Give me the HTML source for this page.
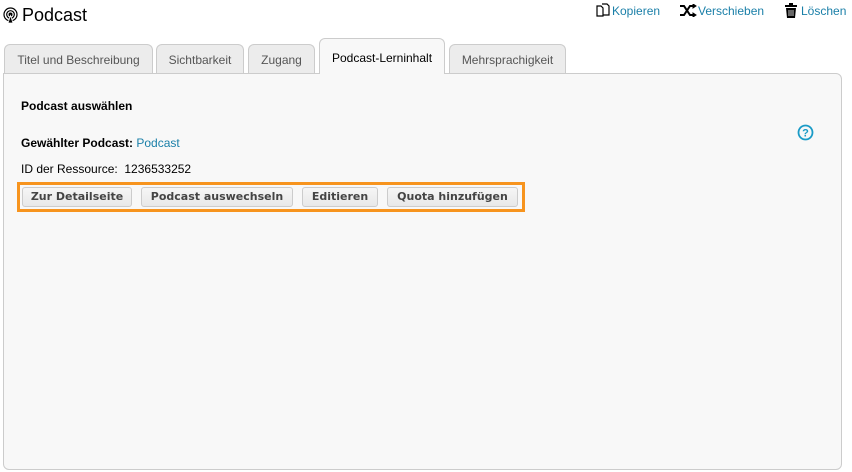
<!DOCTYPE html>
<html><head><meta charset="utf-8"><style>
*{box-sizing:border-box;margin:0;padding:0}
body{width:852px;height:472px;background:#fff;font-family:"Liberation Sans",Arial,sans-serif;position:relative;overflow:hidden;color:#000}
.abs{position:absolute}
h1{position:absolute;left:22px;top:5px;font-size:18px;font-weight:normal}
.act{position:absolute;top:4px;font-size:12px;color:#1a7fa8}
.tab{position:absolute;top:44px;height:30px;border:1px solid #ccc;border-bottom:none;border-radius:6px 6px 0 0;background:#ececec;color:#555;font-size:12px;text-align:center;line-height:30px}
.tab.on{top:38px;height:36px;background:#f8f8f8;color:#000;z-index:2;line-height:38px}
.panel{position:absolute;left:3px;top:73px;width:839px;height:397px;border:1px solid #ccc;border-radius:0 6px 6px 6px;background:#f8f8f8}
.t{position:absolute;font-size:12px}
.obox{position:absolute;left:17px;top:182px;width:508px;height:30px;border:3px solid #f7941e}
.btn{position:absolute;top:187px;height:20px;border:1px solid #ccc;border-radius:3px;background:linear-gradient(#f6f6f6,#e8e8e8);font-family:"DejaVu Sans",Verdana,sans-serif;font-weight:bold;font-size:11px;color:#444;text-align:center;line-height:18px}
</style></head><body>
<svg class="abs" style="left:2px;top:7px" width="17" height="17" viewBox="0 0 17 17" fill="none" stroke="#000" stroke-width="1.2"><circle cx="8.5" cy="7.5" r="6.5"/><circle cx="8.5" cy="7.5" r="3.8"/><circle cx="8.5" cy="7.5" r="1.4" fill="#000"/><path d="M8.5 8.5L6 16H11Z" fill="#000" stroke="#fff" stroke-width="0.8"/></svg>
<h1>Podcast</h1>
<svg class="abs" style="left:596px;top:3px" width="15" height="15" viewBox="0 0 15 15" fill="none" stroke="#000" stroke-width="1.2"><path d="M1 3h4l2 2v8H1z"/><path d="M6 1h5l2 2v9H7"/></svg>
<span class="act" style="left:612px">Kopieren</span>
<svg class="abs" style="left:680px;top:4px" width="17" height="13" viewBox="0 0 17 13" fill="none" stroke="#000" stroke-width="2"><path d="M0 2h4l6 9h4M0 11h4l6-9h4"/><path d="M13 0l3 2-3 2zM13 9l3 2-3 2z" fill="#000" stroke-width="1"/></svg>
<span class="act" style="left:698px">Verschieben</span>
<svg class="abs" style="left:784px;top:3px" width="14" height="15" viewBox="0 0 14 15"><rect x="1" y="2" width="12" height="2" fill="#000"/><rect x="5" y="0" width="4" height="2" fill="#000"/><path d="M2 5h10l-1 10H3z" fill="#000"/><path d="M5 7v6M7 7v6M9 7v6" stroke="#fff" stroke-width="0.8"/></svg>
<span class="act" style="left:801px">Löschen</span>
<div class="tab" style="left:4px;width:149px">Titel und Beschreibung</div>
<div class="tab" style="left:156px;width:88px">Sichtbarkeit</div>
<div class="tab" style="left:248px;width:67px">Zugang</div>
<div class="tab on" style="left:319px;width:126px">Podcast-Lerninhalt</div>
<div class="tab" style="left:449px;width:117px">Mehrsprachigkeit</div>
<div class="panel"></div>
<div class="t" style="left:21px;top:99px;font-weight:bold">Podcast auswählen</div>
<div class="t" style="left:21px;top:136px"><b>Gewählter Podcast:</b> <span style="color:#1a7fa8">Podcast</span></div>
<div class="t" style="left:21px;top:162px">ID der Ressource:&nbsp; 1236533252</div>
<svg class="abs" style="left:797px;top:124px" width="17" height="17" viewBox="0 0 17 17"><circle cx="8.5" cy="8.5" r="7" fill="none" stroke="#1a9bc7" stroke-width="1.8"/><text x="8.5" y="12.5" font-family="Liberation Sans" font-weight="bold" font-size="11" fill="#1a9bc7" text-anchor="middle">?</text></svg>
<div class="obox"></div>
<div class="btn" style="left:22px;width:110px">Zur Detailseite</div>
<div class="btn" style="left:141px;width:152px">Podcast auswechseln</div>
<div class="btn" style="left:302px;width:76px">Editieren</div>
<div class="btn" style="left:387px;width:131px">Quota hinzufügen</div>
</body></html>
